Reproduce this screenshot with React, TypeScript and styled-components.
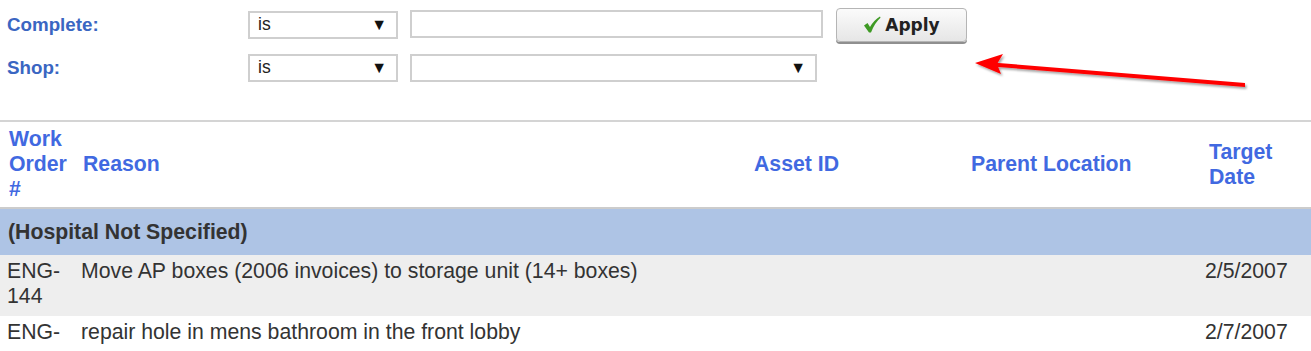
import React from "react";
import styled, { createGlobalStyle } from "styled-components";

const GlobalStyle = createGlobalStyle`
  html, body {
    margin: 0;
    padding: 0;
    background: #ffffff;
    font-family: "Liberation Sans", Arial, sans-serif;
    color: #333333;
  }
`;

type WorkOrder = {
    id: string,
    reason: string,
    assetId: string,
    parentLocation: string,
    targetDate: string
}

const orders: WorkOrder[] = [
    { id: "ENG-144", reason: "Move AP boxes (2006 invoices) to storage unit (14+ boxes)", assetId: "", parentLocation: "", targetDate: "2/5/2007" },
    { id: "ENG-", reason: "repair hole in mens bathroom in the front lobby", assetId: "", parentLocation: "", targetDate: "2/7/2007" },
];

const COLUMNS = "74px 671px 217px 238px 1fr";

const App: React.FC = () => {
    return (
        <Page>
            <GlobalStyle />
            <Filters>
                <FilterRow>
                    <FilterLabel>Complete:</FilterLabel>
                    <Select $width={150}>is<Caret>▼</Caret></Select>
                    <TextInput />
                    <ApplyButton>
                        <svg width="18" height="17" viewBox="0 0 18 17">
                            <path d="M1 9.5 L4.5 7 L7 11 Q11 4 17 0.5 L17.5 1.8 Q12 6.5 8 16.5 L6 16.5 Z" fill="#3e9a24" />
                        </svg>
                        Apply
                    </ApplyButton>
                </FilterRow>
                <FilterRow>
                    <FilterLabel>Shop:</FilterLabel>
                    <Select $width={150}>is<Caret>▼</Caret></Select>
                    <Select $width={407}><Caret>▼</Caret></Select>
                </FilterRow>
                <Annotation width="300" height="50" viewBox="0 0 300 50">
                    <defs>
                        <filter id="sh" x="-10%" y="-50%" width="120%" height="200%">
                            <feDropShadow dx="1.5" dy="2" stdDeviation="1" floodColor="#000" floodOpacity="0.35" />
                        </filter>
                    </defs>
                    <g filter="url(#sh)" fill="#ff0000" stroke="none">
                        <polygon points="20,14.5 273,35 273,39 20,18.5" />
                        <polygon points="3,15 31,6 25,16 29,26" />
                    </g>
                </Annotation>
            </Filters>
            <Table>
                <HeaderRow>
                    <HeaderCell>Work Order #</HeaderCell>
                    <HeaderCell>Reason</HeaderCell>
                    <HeaderCell>Asset ID</HeaderCell>
                    <HeaderCell>Parent Location</HeaderCell>
                    <HeaderCell>Target Date</HeaderCell>
                </HeaderRow>
                <GroupRow>(Hospital Not Specified)</GroupRow>
                {orders.map((order, index) => (
                    <DataRow key={order.id + index} $odd={index % 2 === 0}>
                        <DataCell>{order.id}</DataCell>
                        <DataCell>{order.reason}</DataCell>
                        <DataCell>{order.assetId}</DataCell>
                        <DataCell>{order.parentLocation}</DataCell>
                        <DataCell>{order.targetDate}</DataCell>
                    </DataRow>
                ))}
            </Table>
        </Page>
    )
}

export default App

const Page = styled.div`
  width: 1311px;
  height: 351px;
  overflow: hidden;
`

const Filters = styled.div`
  position: relative;
  display: flex;
  flex-direction: column;
  gap: 8px;
  padding: 7px 0 0 7px;
  height: 122px;
  box-sizing: border-box;
  border-bottom: 2px solid #d4d4d4;
`

const FilterRow = styled.div`
  display: flex;
  align-items: center;
  height: 35px;
  gap: 12px;
`

const FilterLabel = styled.div`
  width: 229px;
  font-size: 18.75px;
  font-weight: 700;
  color: #3a66c2;
`

const Select = styled.div<{ $width: number }>`
  display: flex;
  align-items: center;
  width: ${p => p.$width}px;
  height: 28px;
  box-sizing: border-box;
  border: 2px solid #cfcfcf;
  padding: 0 8px;
  font-size: 17.5px;
  color: #222;
  background: #fff;
`

const Caret = styled.span`
  margin-left: auto;
  font-size: 16px;
  color: #111;
  padding-right: 1px;
`

const TextInput = styled.div`
  width: 413px;
  height: 28px;
  margin-top: -2px;
  box-sizing: border-box;
  border: 2px solid #cfcfcf;
  background: #fff;
`

const ApplyButton = styled.div`
  display: flex;
  align-items: center;
  justify-content: center;
  gap: 4px;
  width: 131px;
  height: 34px;
  margin-left: 1px;
  margin-top: 0;
  box-sizing: border-box;
  border: 1px solid #b5b5b5;
  border-radius: 4px;
  background: linear-gradient(#fbfbfb, #e6e6e6);
  box-shadow: 0 2px 0 #8f8f8f;
  font-family: "DejaVu Sans", sans-serif;
  font-weight: 700;
  font-size: 17px;
  color: #222;
`

const Annotation = styled.svg`
  position: absolute;
  left: 972px;
  top: 48px;
`

const Table = styled.div`
  display: flex;
  flex-direction: column;
`

const HeaderRow = styled.div`
  display: grid;
  grid-template-columns: ${COLUMNS};
  align-items: center;
  height: 85px;
  border-bottom: 2px solid #cccccc;
`

const HeaderCell = styled.div`
  padding: 0 4px 0 9px;
  font-size: 21.25px;
  line-height: 25px;
  font-weight: 700;
  color: #4169e1;
`

const GroupRow = styled.div`
  height: 46px;
  display: flex;
  align-items: center;
  padding-left: 8px;
  background: #aec4e5;
  font-size: 21.25px;
  font-weight: 700;
  color: #333;
`

const DataRow = styled.div<{ $odd: boolean }>`
  display: grid;
  grid-template-columns: ${COLUMNS};
  padding: 4px 0 7px;
  background: ${p => p.$odd ? "#eeeeee" : "#ffffff"};
`

const DataCell = styled.div`
  padding: 0 4px 0 7px;
  font-size: 21.25px;
  line-height: 25px;
  color: #333;

  &:last-child {
    padding-left: 5px;
  }
`
